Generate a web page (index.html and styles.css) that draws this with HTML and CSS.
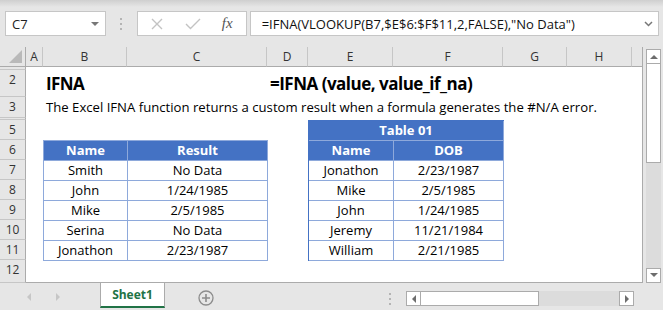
FILE: index.html
```html
<!DOCTYPE html>
<html lang="en">
<head>
    <meta charset="UTF-8">
    <title>IFNA 함수</title>
    <link rel="stylesheet" href="styles.css">
</head>
<body>
    <!-- 수식 입력줄 -->
    <div class="fbar">
        <div class="namebox">C7<span class="caret"></span></div>
        <div class="grip"><i></i><i></i><i></i></div>
        <div class="fxbox">
            <svg class="ic" width="12" height="12" viewBox="0 0 12 12"><path d="M1 1L11 11M11 1L1 11" stroke="#c3c3c3" stroke-width="1.4" fill="none"/></svg>
            <svg class="ic" width="16" height="12" viewBox="0 0 16 12"><path d="M1 6L5.5 10.5L15 1" stroke="#c3c3c3" stroke-width="1.4" fill="none"/></svg>
            <span class="fx">fx</span>
        </div>
        <div class="formula">=IFNA(VLOOKUP(B7,$E$6:$F$11,2,FALSE),"No Data")
            <svg class="chev" width="9" height="6" viewBox="0 0 9 6"><path d="M1 1L4.5 4.5L8 1" stroke="#777" stroke-width="1.5" fill="none"/></svg>
        </div>
    </div>

    <div class="work">
        <div class="sheet">
            <!-- 열 머리글 -->
            <div class="corner"><span class="tri"></span></div>
            <div class="ch">A</div>
            <div class="ch">B</div>
            <div class="ch">C</div>
            <div class="ch">D</div>
            <div class="ch">E</div>
            <div class="ch">F</div>
            <div class="ch">G</div>
            <div class="ch">H</div>
            <div class="ch last"></div>

            <!-- 행 머리글 -->
            <div class="rh" style="grid-row: 2"></div>
            <div class="rh" style="grid-row: 3">2</div>
            <div class="rh" style="grid-row: 4">3</div>
            <div class="rh" style="grid-row: 5"></div>
            <div class="rh" style="grid-row: 6">5</div>
            <div class="rh" style="grid-row: 7">6</div>
            <div class="rh" style="grid-row: 8">7</div>
            <div class="rh" style="grid-row: 9">8</div>
            <div class="rh" style="grid-row: 10">9</div>
            <div class="rh" style="grid-row: 11">10</div>
            <div class="rh" style="grid-row: 12">11</div>
            <div class="rh" style="grid-row: 13">12</div>

            <!-- 내용 -->
            <div class="title">IFNA</div>
            <div class="syntax">=IFNA (value, value_if_na)</div>
            <div class="desc">The Excel IFNA function returns a custom result when a formula generates the #N/A error.</div>

            <div class="tbl left">
                <div class="th">Name</div><div class="th">Result</div>
                <div class="td">Smith</div><div class="td">No Data</div>
                <div class="td">John</div><div class="td">1/24/1985</div>
                <div class="td">Mike</div><div class="td">2/5/1985</div>
                <div class="td">Serina</div><div class="td">No Data</div>
                <div class="td">Jonathon</div><div class="td">2/23/1987</div>
            </div>

            <div class="tbl right">
                <div class="th cap">Table 01</div>
                <div class="th">Name</div><div class="th">DOB</div>
                <div class="td">Jonathon</div><div class="td">2/23/1987</div>
                <div class="td">Mike</div><div class="td">2/5/1985</div>
                <div class="td">John</div><div class="td">1/24/1985</div>
                <div class="td">Jeremy</div><div class="td">11/21/1984</div>
                <div class="td">William</div><div class="td">2/21/1985</div>
            </div>
        </div>

        <!-- 세로 스크롤 -->
        <div class="vscroll">
            <div class="sbtn"><span class="up"></span></div>
            <div class="vthumb"></div>
            <div class="vtrack"></div>
            <div class="sbtn"><span class="down"></span></div>
        </div>
    </div>

    <!-- 시트 탭 -->
    <div class="tabs">
        <span class="nav l"></span>
        <span class="nav r"></span>
        <div class="tab">Sheet1</div>
        <svg class="add" width="16" height="16" viewBox="0 0 16 16"><circle cx="8" cy="8" r="7" stroke="#8c8c8c" stroke-width="1.3" fill="none"/><path d="M8 4V12M4 8H12" stroke="#8c8c8c" stroke-width="1.6"/></svg>
        <div class="grip h"><i></i><i></i><i></i></div>
        <div class="hscroll">
            <div class="sbtn"><span class="left"></span></div>
            <div class="hthumb"></div>
            <div class="htrack"></div>
            <div class="sbtn"><span class="right"></span></div>
        </div>
    </div>
</body>
</html>
```

FILE: styles.css
```css
*{
    box-sizing: border-box;
}
body{
    margin: 0;
    width: 663px;
    height: 310px;
    overflow: hidden;
    background: #e6e6e6;
    font-family: "Open Sans", sans-serif;
    color: #222;
}

/* 수식 입력줄 */
.fbar{
    height: 47px;
    display: flex;
    align-items: center;
    padding: 0 4px 0 5px;
    background: linear-gradient(#cfcfcf, #e6e6e6 7px);
}
.namebox, .fxbox, .formula{
    height: 25px;
    background: #fff;
    border: 1px solid #c6c6c6;
    display: flex;
    align-items: center;
}
.namebox{
    width: 101px;
    padding-left: 6px;
    font-size: 13px;
    justify-content: space-between;
}
.caret{
    margin-right: 6px;
    border-left: 4px solid transparent;
    border-right: 4px solid transparent;
    border-top: 4px solid #777;
}
.grip{
    width: 31px;
    display: flex;
    flex-direction: column;
    align-items: center;
    gap: 3px;
}
.grip i{
    width: 2px;
    height: 2px;
    background: #b4b4b4;
}
.fxbox{
    width: 110px;
    padding-left: 13px;
    gap: 0;
}
.ic:first-child{
    margin-right: 22px;
}
.ic{
    margin-top: 1px;
}
.fx{
    margin-left: 21px;
    font-family: "Liberation Serif", serif;
    font-style: italic;
    font-size: 15px;
    color: #555;
}
.formula{
    width: 410px;
    margin-left: 3px;
    padding-left: 11px;
    font-size: 13px;
    color: #111;
    position: relative;
}
.chev{
    position: absolute;
    right: 5px;
    top: 9px;
}

/* 작업 영역 */
.work{
    display: flex;
    height: 236px;
}
.sheet{
    width: 643px;
    background: #fff;
    border-right: 1px solid #ababab;
    border-bottom: 1px solid #ababab;
    display: grid;
    grid-template-columns: 26px 17px 84px 140px 41px 85px 110px 64px 65px 10px;
    grid-template-rows: 20px 3px 27px 21px 2px 20px 20px 20px 20px 20px 20px 20px 23px;
    font-size: 13px;
}
.corner{
    grid-row: 1;
    grid-column: 1;
    background: #e6e6e6;
    border-right: 1px solid #ababab;
    border-bottom: 1px solid #ababab;
    position: relative;
}
.tri{
    position: absolute;
    right: 3px;
    bottom: 3px;
    border-left: 13px solid transparent;
    border-bottom: 13px solid #b9b9b9;
}
.ch{
    grid-row: 1;
    background: #e6e6e6;
    border-right: 1px solid #c6c6c6;
    border-bottom: 1px solid #ababab;
    text-align: center;
    font-size: 12px;
    line-height: 20px;
    color: #333;
}
.ch.last{
    border-right: 0;
}
.rh{
    grid-column: 1;
    background: #e6e6e6;
    border-right: 1px solid #ababab;
    border-bottom: 1px solid #c6c6c6;
    text-align: center;
    font-size: 12px;
    line-height: 20px;
    color: #333;
}

.title{
    grid-row: 3;
    grid-column: 3;
    padding-left: 3px;
    font-size: 17px;
    letter-spacing: -0.6px;
    font-weight: bold;
    line-height: 28px;
    color: #000;
}
.syntax{
    grid-row: 3;
    grid-column: 5 / 9;
    padding-left: 3px;
    font-size: 17px;
    letter-spacing: -0.5px;
    font-weight: bold;
    line-height: 28px;
    white-space: nowrap;
    color: #000;
}
.desc{
    grid-row: 4;
    grid-column: 3 / 10;
    padding-left: 3px;
    font-size: 13.15px;
    line-height: 21px;
    white-space: nowrap;
    color: #000;
}

/* 표 */
.tbl{
    display: grid;
    align-self: start;
    justify-self: start;
    border-top: 1px solid #8ea9db;
    border-left: 1px solid #8ea9db;
}
.tbl.left{
    grid-row: 7 / 13;
    grid-column: 3 / 5;
    grid-template-columns: 84px 140px;
}
.tbl.right{
    grid-row: 6 / 13;
    grid-column: 6 / 8;
    grid-template-columns: 85px 110px;
    border-top-color: #4472c4;
    border-left-color: #4472c4;
}
.th, .td{
    height: 20px;
    border-right: 1px solid #8ea9db;
    border-bottom: 1px solid #8ea9db;
    text-align: center;
    line-height: 19px;
    font-size: 13px;
    white-space: nowrap;
}
.th{
    background: #4472c4;
    color: #fff;
    font-weight: bold;
}
.th.cap{
    grid-column: 1 / 3;
}
.td{
    color: #000;
}

/* 스크롤 */
.vscroll{
    width: 20px;
    padding: 2px 2px 0 3px;
    display: flex;
    flex-direction: column;
}
.sbtn{
    width: 15px;
    height: 15px;
    background: #fff;
    border: 1px solid #ababab;
    position: relative;
    flex: none;
}
.sbtn span{
    position: absolute;
    left: 3px;
    top: 5px;
    border-left: 4px solid transparent;
    border-right: 4px solid transparent;
}
.sbtn .up{
    border-bottom: 4px solid #6d6d6d;
}
.sbtn .down{
    top: 4px;
    border-top: 4px solid #6d6d6d;
}
.vthumb{
    height: 99px;
    background: #fff;
    border: 1px solid #ababab;
    border-top: 0;
}
.vtrack{
    flex: 1;
    background: #dcdcdc;
}

/* 시트 탭 */
.tabs{
    height: 27px;
    display: flex;
    align-items: flex-start;
    position: relative;
}
.nav{
    position: absolute;
    top: 10px;
    border-top: 4px solid transparent;
    border-bottom: 4px solid transparent;
}
.nav.l{
    left: 27px;
    border-right: 4px solid #c6c6c6;
}
.nav.r{
    left: 56px;
    border-left: 4px solid #c6c6c6;
}
.tab{
    margin-left: 100px;
    width: 65px;
    height: 25px;
    background: #fff;
    border-left: 1px solid #ababab;
    border-right: 1px solid #ababab;
    border-bottom: 2px solid #217346;
    color: #217346;
    font-weight: bold;
    font-size: 12px;
    text-align: center;
    line-height: 24px;
}
.add{
    margin: 7px 0 0 33px;
}
.grip.h{
    width: 6px;
    margin: 10px 0 0 173px;
}
.hscroll{
    margin: 8px 0 0 13px;
    width: 228px;
    display: flex;
}
.hscroll .sbtn span{
    top: 3px;
    left: 5px;
    border-top: 4px solid transparent;
    border-bottom: 4px solid transparent;
    border-left: 0;
    border-right: 0;
}
.sbtn .left{
    border-right: 4px solid #6d6d6d !important;
}
.sbtn .right{
    border-left: 4px solid #6d6d6d !important;
}
.hthumb{
    width: 118px;
    height: 15px;
    background: #fff;
    border: 1px solid #ababab;
    border-left: 0;
}
.htrack{
    flex: 1;
    height: 15px;
    background: #dcdcdc;
}
```
